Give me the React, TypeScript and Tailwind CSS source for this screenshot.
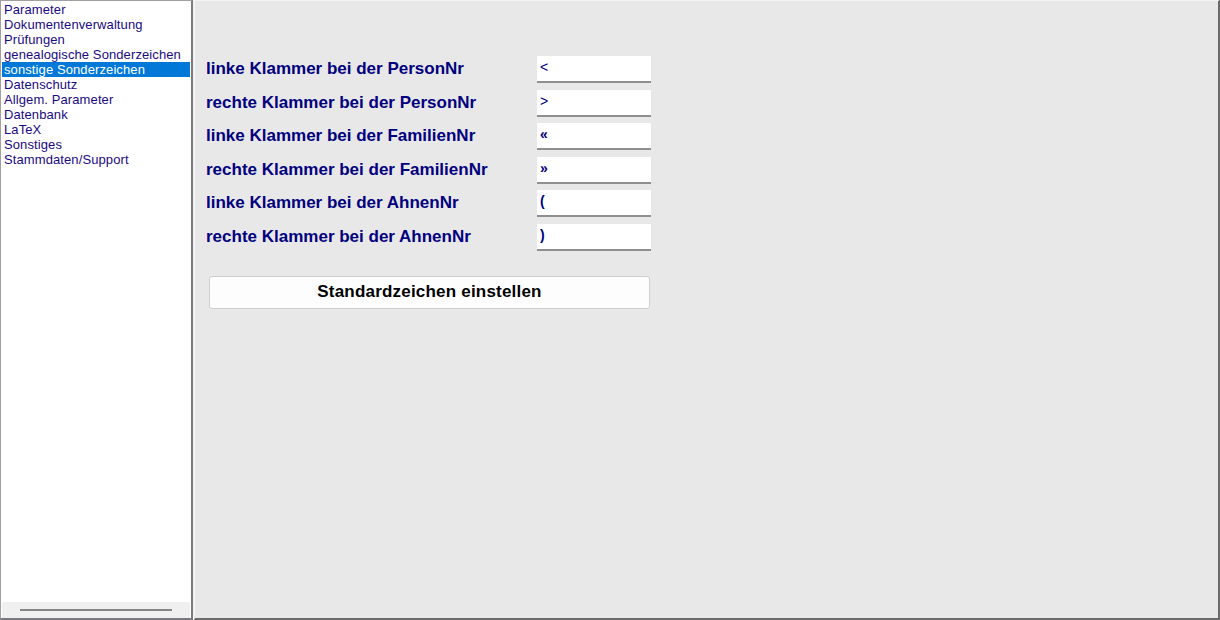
const menuItems = [
  'Parameter',
  'Dokumentenverwaltung',
  'Prüfungen',
  'genealogische Sonderzeichen',
  'sonstige Sonderzeichen',
  'Datenschutz',
  'Allgem. Parameter',
  'Datenbank',
  'LaTeX',
  'Sonstiges',
  'Stammdaten/Support',
];

const brackets = [
  { label: 'linke Klammer bei der PersonNr', value: '<', bold: false },
  { label: 'rechte Klammer bei der PersonNr', value: '>', bold: false },
  { label: 'linke Klammer bei der FamilienNr', value: '«', bold: true },
  { label: 'rechte Klammer bei der FamilienNr', value: '»', bold: true },
  { label: 'linke Klammer bei der AhnenNr', value: '(', bold: true },
  { label: 'rechte Klammer bei der AhnenNr', value: ')', bold: true },
];

export default function App() {
  const selected = 'sonstige Sonderzeichen';

  return (
    <div className="flex h-[620px] w-[1220px] bg-[#f0f0f0] font-['Liberation_Sans',Arial,sans-serif]">
      {/* Navigation list */}
      <div className="flex w-[193px] flex-col border-l border-t border-r-2 border-b-2 border-l-[#a0a0a0] border-t-[#a0a0a0] border-r-[#7a7a80] border-b-[#7a7a80] bg-white">
        <ul className="flex-1 px-[1px] pt-[1px]">
          {menuItems.map((item) => (
            <li
              key={item}
              className={
                item === selected
                  ? 'h-[15px] bg-[#0078d7] pl-[2px] text-[13px] leading-[15px] tracking-[0.1px] text-white'
                  : 'h-[15px] pl-[2px] text-[13px] leading-[15px] tracking-[0.1px] text-[#1a0a82]'
              }
            >
              {item}
            </li>
          ))}
        </ul>
        {/* Horizontal scrollbar */}
        <div className="mx-[1px] flex h-[16px] items-center bg-[#f0f0f0] pl-[18px]">
          <div className="h-[2px] w-[152px] bg-[#858585]" />
        </div>
      </div>

      {/* Settings panel */}
      <div className="ml-[1px] flex-1 border-l border-t border-r-2 border-b-2 border-l-[#f4f4f4] border-t-[#f4f4f4] border-r-[#6a6a6a] border-b-[#6a6a6a] bg-[#e8e8e8] pl-[11px] pt-[55px]">
        <div className="flex flex-col gap-[6.5px]">
          {brackets.map((b) => (
            <div key={b.label} className="flex h-[27px] items-center">
              <div className="w-[331px] pb-[1px] text-[17px] font-bold text-[#00007f]">{b.label}</div>
              <div className="h-[27px] w-[114px] border-b-2 border-[#8f8f8f] bg-white pl-[3px] leading-[22px]">
                <span className={b.bold ? 'text-[14px] font-bold text-[#00007f]' : 'text-[14px] text-[#00007f]'}>
                  {b.value}
                </span>
              </div>
            </div>
          ))}
        </div>

        <button className="ml-[3px] mt-[25px] h-[33px] w-[441px] rounded-[3px] border border-[#cfcfcf] bg-[#fdfdfd] text-[17px] font-bold tracking-[0.2px] text-black">
          Standardzeichen einstellen
        </button>
      </div>
    </div>
  );
}
